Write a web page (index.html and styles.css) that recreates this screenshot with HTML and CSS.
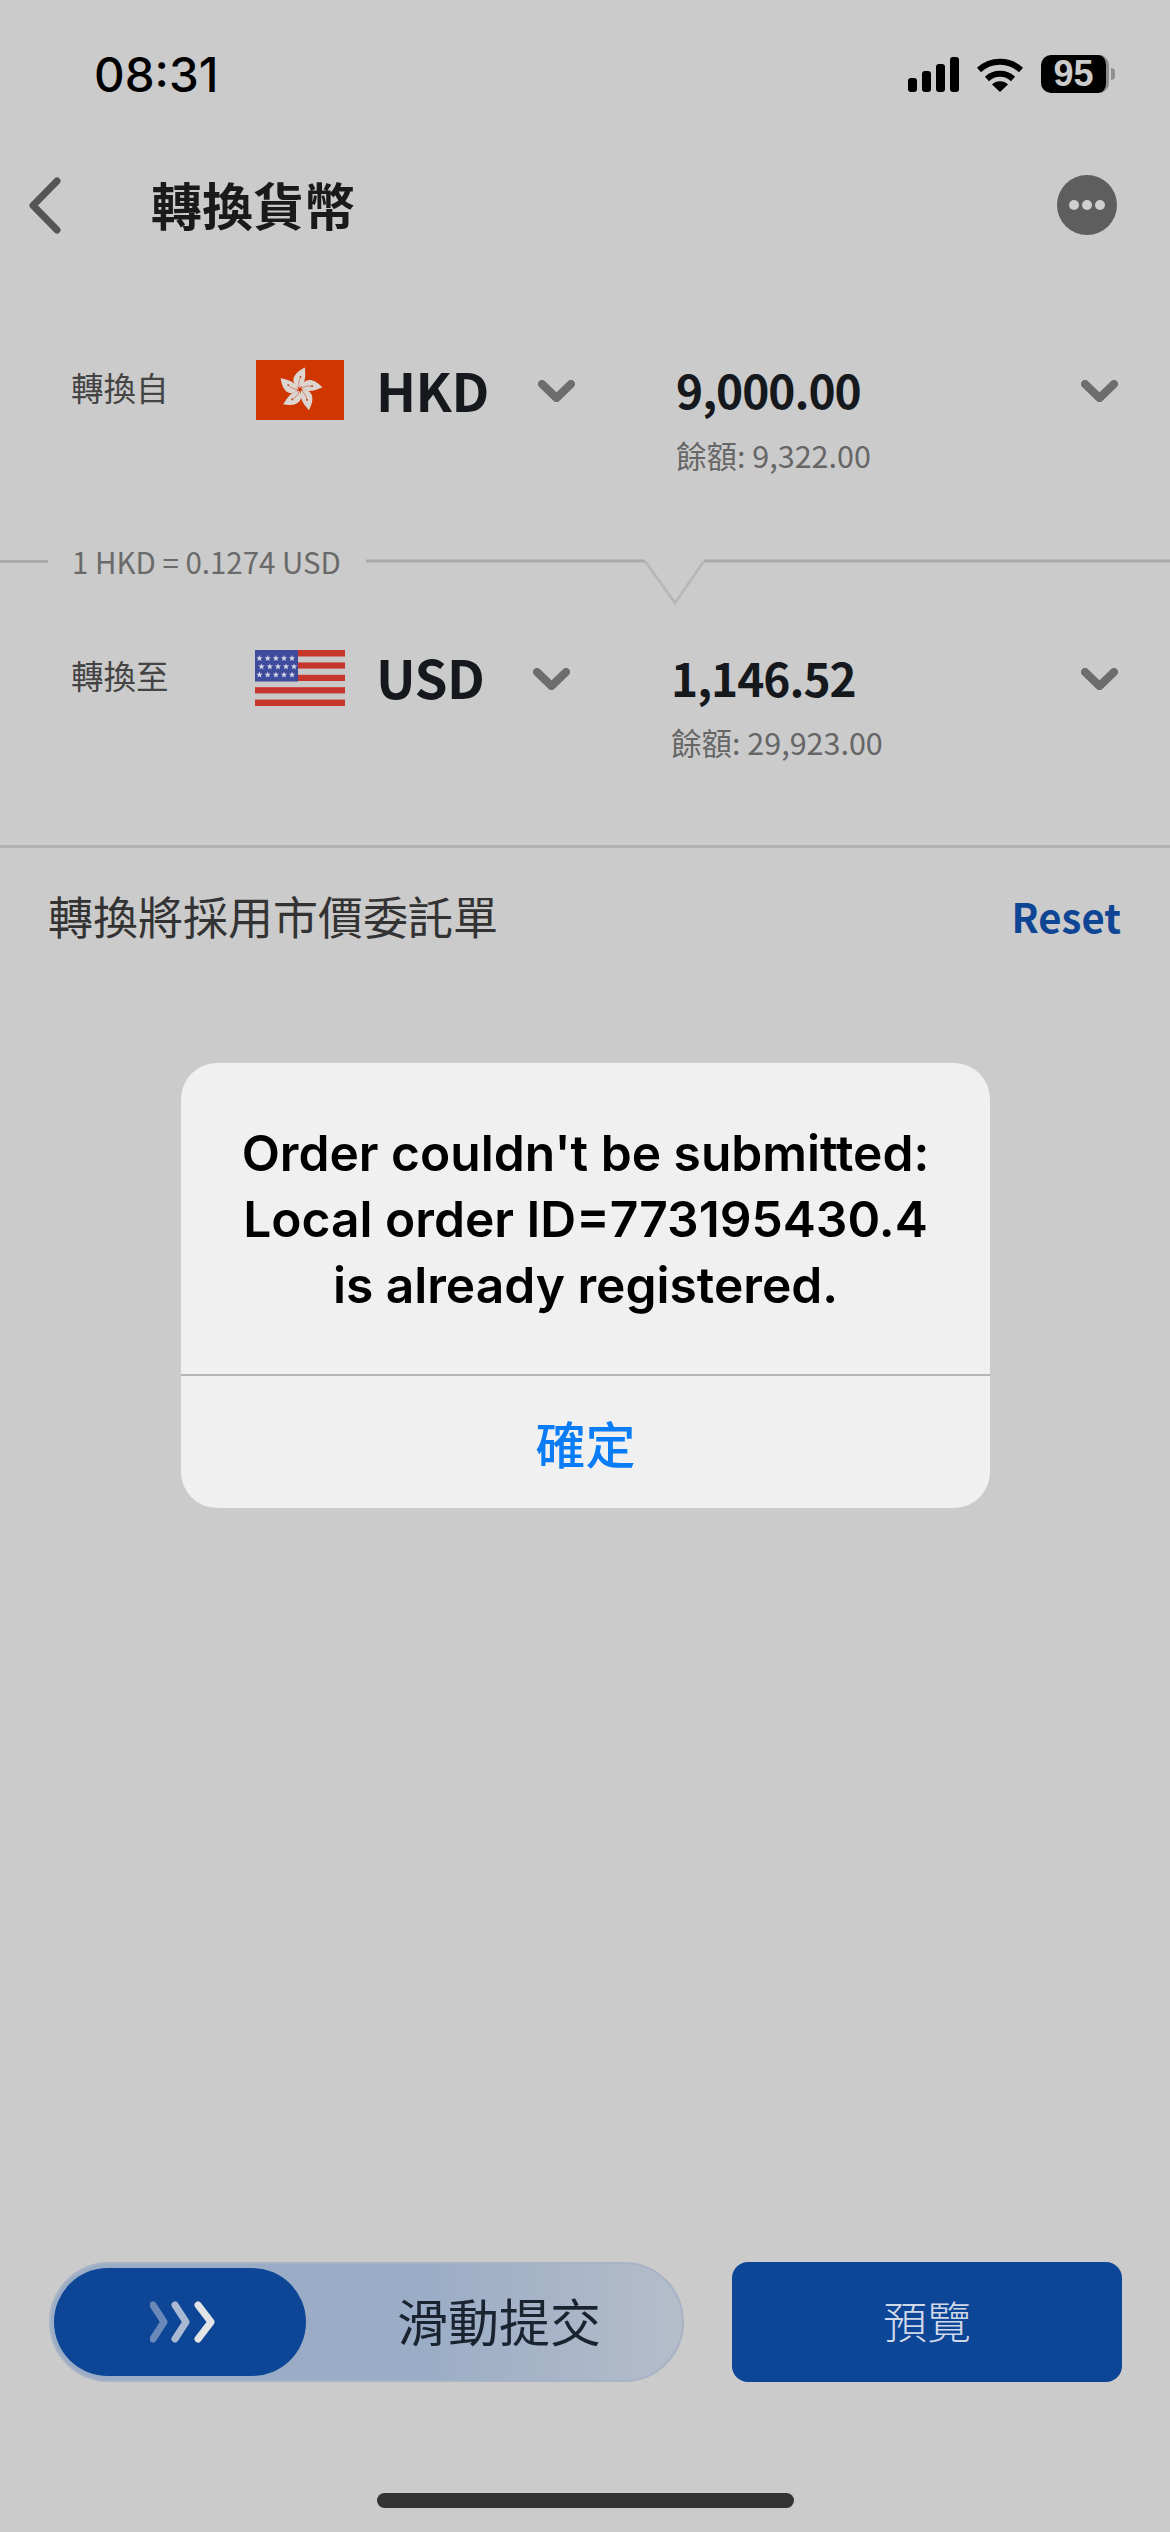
FILE: index.html
```html
<!DOCTYPE html>
<html lang="zh-Hant">
<head>
    <meta charset="UTF-8">
    <meta name="viewport" content="width=device-width, initial-scale=1.0">
    <title>轉換貨幣</title>
    <link rel="stylesheet" href="styles.css">
</head>
<body>
    <div class="page">
        <div class="status-bar">
            <span class="status-time">08:31</span>
            <div class="status-icons">
                <svg class="icon-signal" viewBox="0 0 51 35">
                    <rect x="0" y="21" width="9" height="14" rx="3"/>
                    <rect x="14" y="14" width="9" height="21" rx="3"/>
                    <rect x="28" y="7" width="9" height="28" rx="3"/>
                    <rect x="42" y="0" width="9" height="35" rx="3"/>
                </svg>
                <svg class="icon-wifi" viewBox="0 0 48 36">
                    <path d="M3 14 A31 31 0 0 1 45 14" fill="none" stroke="#000" stroke-width="6"/>
                    <path d="M11 23 A19 19 0 0 1 37 23" fill="none" stroke="#000" stroke-width="6"/>
                    <path d="M16 28.5 A11.5 11.5 0 0 1 32 28.5 L24 36 Z"/>
                </svg>
                <div class="battery">
                    <span class="battery-level">95</span>
                    <span class="battery-nub"></span>
                </div>
            </div>
        </div>

        <div class="nav-bar">
            <svg class="icon-back" viewBox="0 0 33 57">
                <polyline points="29,4 5,28.5 29,53" fill="none" stroke="#555" stroke-width="7" stroke-linecap="round" stroke-linejoin="round"/>
            </svg>
            <h1 class="nav-title">轉換貨幣</h1>
            <div class="more-btn">
                <span class="more-dot"></span>
                <span class="more-dot"></span>
                <span class="more-dot"></span>
            </div>
        </div>

        <div class="pair pair-from">
            <div class="pair-main">
                <span class="pair-label">轉換自</span>
                <svg class="flag flag-hk" viewBox="0 0 88 60">
                    <defs>
                        <g id="petal">
                            <path d="M0 -1.5 C-9 -5 -10 -15 5 -22 C5 -16 7 -8 0 -1.5 Z" fill="#dcd6d3"/>
                            <path d="M-0.5 -2 C-2 -6 -1 -10 1 -13" fill="none" stroke="#c9674a" stroke-width="0.7"/>
                            <circle cx="0.5" cy="-12.5" r="1" fill="#c9502a"/>
                        </g>
                    </defs>
                    <rect width="88" height="60" fill="#d03600"/>
                    <g transform="translate(44 29.5)">
                        <use href="#petal"/>
                        <use href="#petal" transform="rotate(72)"/>
                        <use href="#petal" transform="rotate(144)"/>
                        <use href="#petal" transform="rotate(216)"/>
                        <use href="#petal" transform="rotate(288)"/>
                    </g>
                </svg>
                <span class="pair-code">HKD</span>
                <svg class="chevron chevron-code" viewBox="0 0 37 22"><polyline points="4,4 18.5,18 33,4"/></svg>
                <span class="pair-amount">9,000.00</span>
                <svg class="chevron" viewBox="0 0 37 22"><polyline points="4,4 18.5,18 33,4"/></svg>
            </div>
            <div class="pair-balance">餘額: 9,322.00</div>
        </div>

        <div class="rate-line">
            <span class="rate-rule"></span>
            <span class="rate-text">1 HKD = 0.1274 USD</span>
            <svg class="rate-notch" viewBox="0 0 804 60">
                <path d="M0 11 H279 M338 11 H804" stroke="#a9a9a9" stroke-width="3" fill="none"/>
                <polyline points="279,11 309,53 338,11" stroke="#b6b6b6" stroke-width="2.5" fill="none"/>
            </svg>
        </div>

        <div class="pair pair-to">
            <div class="pair-main">
                <span class="pair-label">轉換至</span>
                <svg class="flag flag-us" viewBox="0 0 90 56">
                    <defs>
                        <polygon id="star" points="0,-3.2 0.9,-1 3.2,-1 1.4,0.5 2,2.8 0,1.5 -2,2.8 -1.4,0.5 -3.2,-1 -0.9,-1" fill="#cfd3e4"/>
                    </defs>
                    <rect width="90" height="56" fill="#c9c9c9"/>
                    <rect y="0" width="90" height="6.5" fill="#c6362c"/>
                    <rect y="12.4" width="90" height="6.2" fill="#c6362c"/>
                    <rect y="24.8" width="90" height="6.2" fill="#c6362c"/>
                    <rect y="37.2" width="90" height="6.2" fill="#c6362c"/>
                    <rect y="49.6" width="90" height="6.4" fill="#c6362c"/>
                    <rect width="43" height="31.5" fill="#3e4a9a"/>
                    <use href="#star" x="4.5" y="8.3"/>
                    <use href="#star" x="12.7" y="8.3"/>
                    <use href="#star" x="20.9" y="8.3"/>
                    <use href="#star" x="29" y="8.3"/>
                    <use href="#star" x="37" y="8.3"/>
                    <use href="#star" x="6.5" y="16.6"/>
                    <use href="#star" x="14.8" y="16.6"/>
                    <use href="#star" x="23" y="16.6"/>
                    <use href="#star" x="31" y="16.6"/>
                    <use href="#star" x="39" y="16.6"/>
                    <use href="#star" x="4.5" y="24.8"/>
                    <use href="#star" x="12.7" y="24.8"/>
                    <use href="#star" x="20.9" y="24.8"/>
                    <use href="#star" x="29" y="24.8"/>
                    <use href="#star" x="37" y="24.8"/>
                </svg>
                <span class="pair-code">USD</span>
                <svg class="chevron chevron-code" viewBox="0 0 37 22"><polyline points="4,4 18.5,18 33,4"/></svg>
                <span class="pair-amount">1,146.52</span>
                <svg class="chevron" viewBox="0 0 37 22"><polyline points="4,4 18.5,18 33,4"/></svg>
            </div>
            <div class="pair-balance">餘額: 29,923.00</div>
        </div>

        <div class="notice">
            <span class="notice-text">轉換將採用市價委託單</span>
            <span class="notice-reset">Reset</span>
        </div>

        <div class="actions">
            <div class="slider">
                <div class="slider-thumb">
                    <svg class="icon-arrows" viewBox="0 0 66 42">
                        <polyline points="3,4 14,21 3,38" stroke="#6a88b8"/>
                        <polyline points="25,4 36,21 25,38" stroke="#a9b9d2"/>
                        <polyline points="48,4 61,21 48,38" stroke="#e2e4e6"/>
                    </svg>
                </div>
                <span class="slider-label">滑動提交</span>
            </div>
            <div class="preview-btn">預覽</div>
        </div>

        <div class="home-bar"></div>

        <div class="alert">
            <div class="alert-message">Order couldn't be submitted:<br>Local order ID=773195430.4<br>is already registered.</div>
            <div class="alert-button">確定</div>
        </div>
    </div>
</body>
</html>
```

FILE: styles.css
```css
* {
    margin: 0;
    padding: 0;
    box-sizing: border-box;
}

body {
    font-family: "Noto Sans CJK TC", "Noto Sans", sans-serif;
    background-color: #cbcbcb;
}

.page {
    position: relative;
    width: 1170px;
    height: 2532px;
    display: flex;
    flex-direction: column;
    overflow: hidden;
}

/* status bar */
.status-bar {
    height: 148px;
    display: flex;
    justify-content: space-between;
    align-items: center;
    padding: 0 55px 0 94px;
}

.status-time {
    font-family: Inter, sans-serif;
    font-size: 47.5px;
    font-weight: 500;
    color: #000;
}

.status-icons {
    display: flex;
    align-items: center;
}

.icon-signal {
    width: 51px;
    height: 35px;
    margin-right: 17px;
}

.icon-wifi {
    width: 48px;
    height: 36px;
    margin-right: 17px;
}

.battery {
    display: flex;
    align-items: center;
}

.battery-level {
    width: 68px;
    height: 38px;
    background: #000;
    border-right: 3px solid #8c8c8c;
    border-radius: 10px;
    font-family: "Liberation Sans", sans-serif;
    font-size: 36px;
    font-weight: bold;
    line-height: 38px;
    text-align: center;
    color: #cbcbcb;
}

.battery-nub {
    width: 4px;
    height: 12px;
    margin-left: 2px;
    background: #8f8f8f;
    border-radius: 0 4px 4px 0;
}

/* nav bar */
.nav-bar {
    height: 114px;
    display: flex;
    align-items: center;
    padding: 0 53px 0 28px;
}

.icon-back {
    width: 33px;
    height: 57px;
}

.nav-title {
    flex: 1;
    margin-left: 90px;
    font-size: 51px;
    font-weight: bold;
    line-height: 60px;
    margin-bottom: 2px;
    color: #1a1a1a;
}

.more-btn {
    width: 60px;
    height: 60px;
    border-radius: 50%;
    background: #5e5e5e;
    display: flex;
    justify-content: center;
    align-items: center;
    gap: 3px;
}

.more-dot {
    width: 10px;
    height: 10px;
    border-radius: 50%;
    background: #cfcfcf;
}

/* currency pairs */
.pair-from {
    padding-top: 98px;
}

.pair-to {
    margin-top: 38px;
    padding-bottom: 80px;
    border-bottom: 3px solid #b2b2b2;
}

.pair-main {
    height: 60px;
    display: flex;
    align-items: center;
    padding: 0 52px 0 71px;
}

.pair-label {
    width: 185px;
    margin-bottom: 8px;
    font-size: 32.5px;
    color: #444;
}

.flag {
    flex-shrink: 0;
}

.flag-hk {
    width: 88px;
    height: 60px;
    margin-right: 32px;
}

.flag-us {
    width: 90px;
    height: 56px;
    margin: 0 31px 0 -1px;
}

.pair-code {
    width: 162px;
    margin-bottom: 2px;
    font-size: 53px;
    font-weight: 600;
    letter-spacing: -0.5px;
    color: #15181c;
}

.pair-to .pair-code {
    width: 157px;
    margin-bottom: 4px;
}

.chevron {
    width: 37px;
    height: 22px;
    flex-shrink: 0;
    margin-top: 2px;
}

.chevron polyline {
    fill: none;
    stroke: #6d6d6d;
    stroke-width: 8;
    stroke-linecap: round;
    stroke-linejoin: round;
}

.chevron-code {
    margin-right: 101px;
}

.pair-amount {
    flex: 1;
    margin-bottom: 3px;
    font-size: 46px;
    font-weight: 600;
    letter-spacing: -1px;
    color: #15181c;
}

.pair-balance {
    margin-top: 12px;
    padding-left: 676px;
    font-size: 30.5px;
    line-height: 46px;
    color: #666;
}

.pair-to .pair-balance {
    margin-top: 11px;
    padding-left: 671px;
}

/* rate line */
.rate-line {
    height: 60px;
    margin-top: 72px;
    display: flex;
    align-items: flex-start;
}

.rate-rule {
    width: 48px;
    height: 3px;
    margin-top: 10px;
    background: #a9a9a9;
}

.rate-text {
    width: 318px;
    padding-left: 24px;
    font-size: 29.5px;
    line-height: 22px;
    color: #6a6a6a;
}

.rate-notch {
    width: 804px;
    height: 60px;
}

/* notice */
.notice {
    display: flex;
    justify-content: space-between;
    align-items: center;
    padding: 38px 49px 0 48px;
}

.notice-text {
    font-size: 45px;
    line-height: 60px;
    color: #333;
}

.notice-reset {
    font-size: 40px;
    font-weight: 600;
    line-height: 60px;
    color: #0e4595;
}

/* bottom actions */
.actions {
    margin-top: auto;
    display: flex;
    justify-content: space-between;
    padding: 0 48px 0 49px;
}

.slider {
    width: 635px;
    height: 120px;
    display: flex;
    align-items: center;
    padding: 0 3px;
    border: 2px solid #a8b3c6;
    border-radius: 60px;
    background: linear-gradient(to right, #9badc6 0%, #9badc6 60%, #b5bdca 100%);
}

.slider-thumb {
    width: 252px;
    height: 108px;
    display: flex;
    justify-content: center;
    align-items: center;
    border-radius: 54px;
    background: #0d4597;
}

.icon-arrows {
    width: 66px;
    height: 42px;
    margin-left: 5px;
}

.icon-arrows polyline {
    fill: none;
    stroke-width: 7;
    stroke-linecap: round;
    stroke-linejoin: round;
}

.slider-label {
    margin: 0 0 5px 91px;
    font-size: 51px;
    color: #1a2330;
}

.preview-btn {
    width: 390px;
    height: 120px;
    padding-bottom: 5px;
    display: flex;
    justify-content: center;
    align-items: center;
    border-radius: 16px;
    background: #0d4597;
    font-size: 44px;
    font-weight: 300;
    color: #d0d9e8;
}

.home-bar {
    width: 417px;
    height: 15px;
    margin: 111px auto 24px;
    border-radius: 8px;
    background: #333;
}

/* alert sits over the page */
.alert {
    position: absolute;
    left: 181px;
    top: 1063px;
    width: 809px;
    height: 445px;
    display: flex;
    flex-direction: column;
    border-radius: 36px;
    background: #f0f0f0;
    text-align: center;
}

.alert-message {
    height: 313px;
    padding-top: 57px;
    border-bottom: 2px solid #b4b4b4;
    font-family: Inter, sans-serif;
    font-size: 49.7px;
    font-weight: 600;
    line-height: 66px;
    color: #000;
}

.alert-button {
    flex: 1;
    display: flex;
    justify-content: center;
    align-items: center;
    font-size: 50px;
    font-weight: 500;
    color: #0a7cf5;
}
```
